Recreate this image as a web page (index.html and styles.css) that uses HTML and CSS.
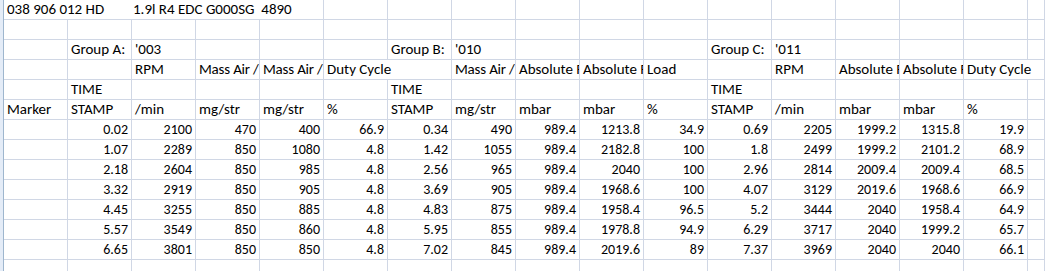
FILE: index.html
```html
<!DOCTYPE html>
<html>
<head>
<meta charset="utf-8">
<link rel="stylesheet" href="styles.css">
</head>
<body>
<div class="sheet">
  <div class="hdr"></div>
  <div class="grid">
    <div class="r">
      <div class="c s5 title"><span class="t1">038 906 012 HD</span><span class="t2">1.9l R4 EDC G000SG&nbsp; 4890</span></div>
      <div class="c"></div><div class="c"></div><div class="c"></div><div class="c"></div><div class="c"></div><div class="c"></div><div class="c"></div><div class="c"></div><div class="c"></div><div class="c"></div><div class="c"></div><div class="c"></div>
    </div>
    <div class="r">
      <div class="c"></div><div class="c"></div><div class="c"></div><div class="c"></div><div class="c"></div><div class="c"></div><div class="c"></div><div class="c"></div><div class="c"></div><div class="c"></div><div class="c"></div><div class="c"></div><div class="c"></div><div class="c"></div><div class="c"></div><div class="c"></div><div class="c"></div>
    </div>
    <div class="r">
      <div class="c"></div><div class="c">Group A:</div><div class="c">'003</div><div class="c"></div><div class="c"></div><div class="c"></div>
      <div class="c">Group B:</div><div class="c">'010</div><div class="c"></div><div class="c"></div><div class="c"></div>
      <div class="c">Group C:</div><div class="c">'011</div><div class="c"></div><div class="c"></div><div class="c"></div><div class="c"></div>
    </div>
    <div class="r">
      <div class="c"></div><div class="c"></div><div class="c">RPM</div><div class="c h">Mass Air / Stroke</div><div class="c h">Mass Air / Stroke</div><div class="c s2">Duty Cycle</div>
      <div class="c h">Mass Air / Stroke</div><div class="c">Absolute Pressure</div><div class="c">Absolute Pressure</div><div class="c">Load</div>
      <div class="c"></div><div class="c">RPM</div><div class="c">Absolute Pressure</div><div class="c">Absolute Pressure</div><div class="c s2">Duty Cycle</div>
    </div>
    <div class="r">
      <div class="c"></div><div class="c">TIME</div><div class="c"></div><div class="c"></div><div class="c"></div><div class="c"></div>
      <div class="c">TIME</div><div class="c"></div><div class="c"></div><div class="c"></div><div class="c"></div>
      <div class="c">TIME</div><div class="c"></div><div class="c"></div><div class="c"></div><div class="c"></div><div class="c"></div>
    </div>
    <div class="r">
      <div class="c">Marker</div><div class="c">STAMP</div><div class="c">/min</div><div class="c">mg/str</div><div class="c">mg/str</div><div class="c">%</div>
      <div class="c">STAMP</div><div class="c">mg/str</div><div class="c">mbar</div><div class="c">mbar</div><div class="c">%</div>
      <div class="c">STAMP</div><div class="c">/min</div><div class="c">mbar</div><div class="c">mbar</div><div class="c">%</div><div class="c"></div>
    </div>
    <div class="r">
      <div class="c"></div><div class="c n">0.02</div><div class="c n">2100</div><div class="c n">470</div><div class="c n">400</div><div class="c n">66.9</div>
      <div class="c n">0.34</div><div class="c n">490</div><div class="c n">989.4</div><div class="c n">1213.8</div><div class="c n">34.9</div>
      <div class="c n">0.69</div><div class="c n">2205</div><div class="c n">1999.2</div><div class="c n">1315.8</div><div class="c n">19.9</div><div class="c"></div>
    </div>
    <div class="r">
      <div class="c"></div><div class="c n">1.07</div><div class="c n">2289</div><div class="c n">850</div><div class="c n">1080</div><div class="c n">4.8</div>
      <div class="c n">1.42</div><div class="c n">1055</div><div class="c n">989.4</div><div class="c n">2182.8</div><div class="c n">100</div>
      <div class="c n">1.8</div><div class="c n">2499</div><div class="c n">1999.2</div><div class="c n">2101.2</div><div class="c n">68.9</div><div class="c"></div>
    </div>
    <div class="r">
      <div class="c"></div><div class="c n">2.18</div><div class="c n">2604</div><div class="c n">850</div><div class="c n">985</div><div class="c n">4.8</div>
      <div class="c n">2.56</div><div class="c n">965</div><div class="c n">989.4</div><div class="c n">2040</div><div class="c n">100</div>
      <div class="c n">2.96</div><div class="c n">2814</div><div class="c n">2009.4</div><div class="c n">2009.4</div><div class="c n">68.5</div><div class="c"></div>
    </div>
    <div class="r">
      <div class="c"></div><div class="c n">3.32</div><div class="c n">2919</div><div class="c n">850</div><div class="c n">905</div><div class="c n">4.8</div>
      <div class="c n">3.69</div><div class="c n">905</div><div class="c n">989.4</div><div class="c n">1968.6</div><div class="c n">100</div>
      <div class="c n">4.07</div><div class="c n">3129</div><div class="c n">2019.6</div><div class="c n">1968.6</div><div class="c n">66.9</div><div class="c"></div>
    </div>
    <div class="r">
      <div class="c"></div><div class="c n">4.45</div><div class="c n">3255</div><div class="c n">850</div><div class="c n">885</div><div class="c n">4.8</div>
      <div class="c n">4.83</div><div class="c n">875</div><div class="c n">989.4</div><div class="c n">1958.4</div><div class="c n">96.5</div>
      <div class="c n">5.2</div><div class="c n">3444</div><div class="c n">2040</div><div class="c n">1958.4</div><div class="c n">64.9</div><div class="c"></div>
    </div>
    <div class="r">
      <div class="c"></div><div class="c n">5.57</div><div class="c n">3549</div><div class="c n">850</div><div class="c n">860</div><div class="c n">4.8</div>
      <div class="c n">5.95</div><div class="c n">855</div><div class="c n">989.4</div><div class="c n">1978.8</div><div class="c n">94.9</div>
      <div class="c n">6.29</div><div class="c n">3717</div><div class="c n">2040</div><div class="c n">1999.2</div><div class="c n">65.7</div><div class="c"></div>
    </div>
    <div class="r">
      <div class="c"></div><div class="c n">6.65</div><div class="c n">3801</div><div class="c n">850</div><div class="c n">850</div><div class="c n">4.8</div>
      <div class="c n">7.02</div><div class="c n">845</div><div class="c n">989.4</div><div class="c n">2019.6</div><div class="c n">89</div>
      <div class="c n">7.37</div><div class="c n">3969</div><div class="c n">2040</div><div class="c n">2040</div><div class="c n">66.1</div><div class="c"></div>
    </div>
    <div class="r">
      <div class="c"></div><div class="c"></div><div class="c"></div><div class="c"></div><div class="c"></div><div class="c"></div><div class="c"></div><div class="c"></div><div class="c"></div><div class="c"></div><div class="c"></div><div class="c"></div><div class="c"></div><div class="c"></div><div class="c"></div><div class="c"></div><div class="c"></div>
    </div>
  </div>
</div>
</body>
</html>
```
FILE: styles.css
```css
html, body {
  margin: 0;
  padding: 0;
  background: #ffffff;
  overflow: hidden;
}

.sheet {
  display: flex;
  width: 1045px;
  height: 271px;
  overflow: hidden;
  font-family: Carlito, Lato, "Open Sans", sans-serif;
  font-size: 15px;
  color: #000000;
}

.hdr {
  flex: 0 0 3px;
  background: #e4ecf7;
  border-right: 1px solid #9eb6ce;
}

.grid {
  flex: 1 1 auto;
  display: flex;
  flex-direction: column;
}

.r {
  display: grid;
  grid-template-columns: repeat(16, 64px) 17px;
  height: 20px;
  flex: 0 0 20px;
}

.c {
  box-sizing: border-box;
  height: 20px;
  border-right: 1px solid #d0d7e5;
  border-bottom: 1px solid #d0d7e5;
  padding: 0 0 0 3px;
  line-height: 19px;
  white-space: nowrap;
  overflow: hidden;
}

.h {
  letter-spacing: -0.2px;
}

.n {
  text-align: right;
  padding-right: 3px;
  font-size: 14px;
}

.s2 {
  grid-column: span 2;
}

.s5 {
  grid-column: span 5;
}

.title {
  display: flex;
}

.t1 {
  width: 126px;
}
```
